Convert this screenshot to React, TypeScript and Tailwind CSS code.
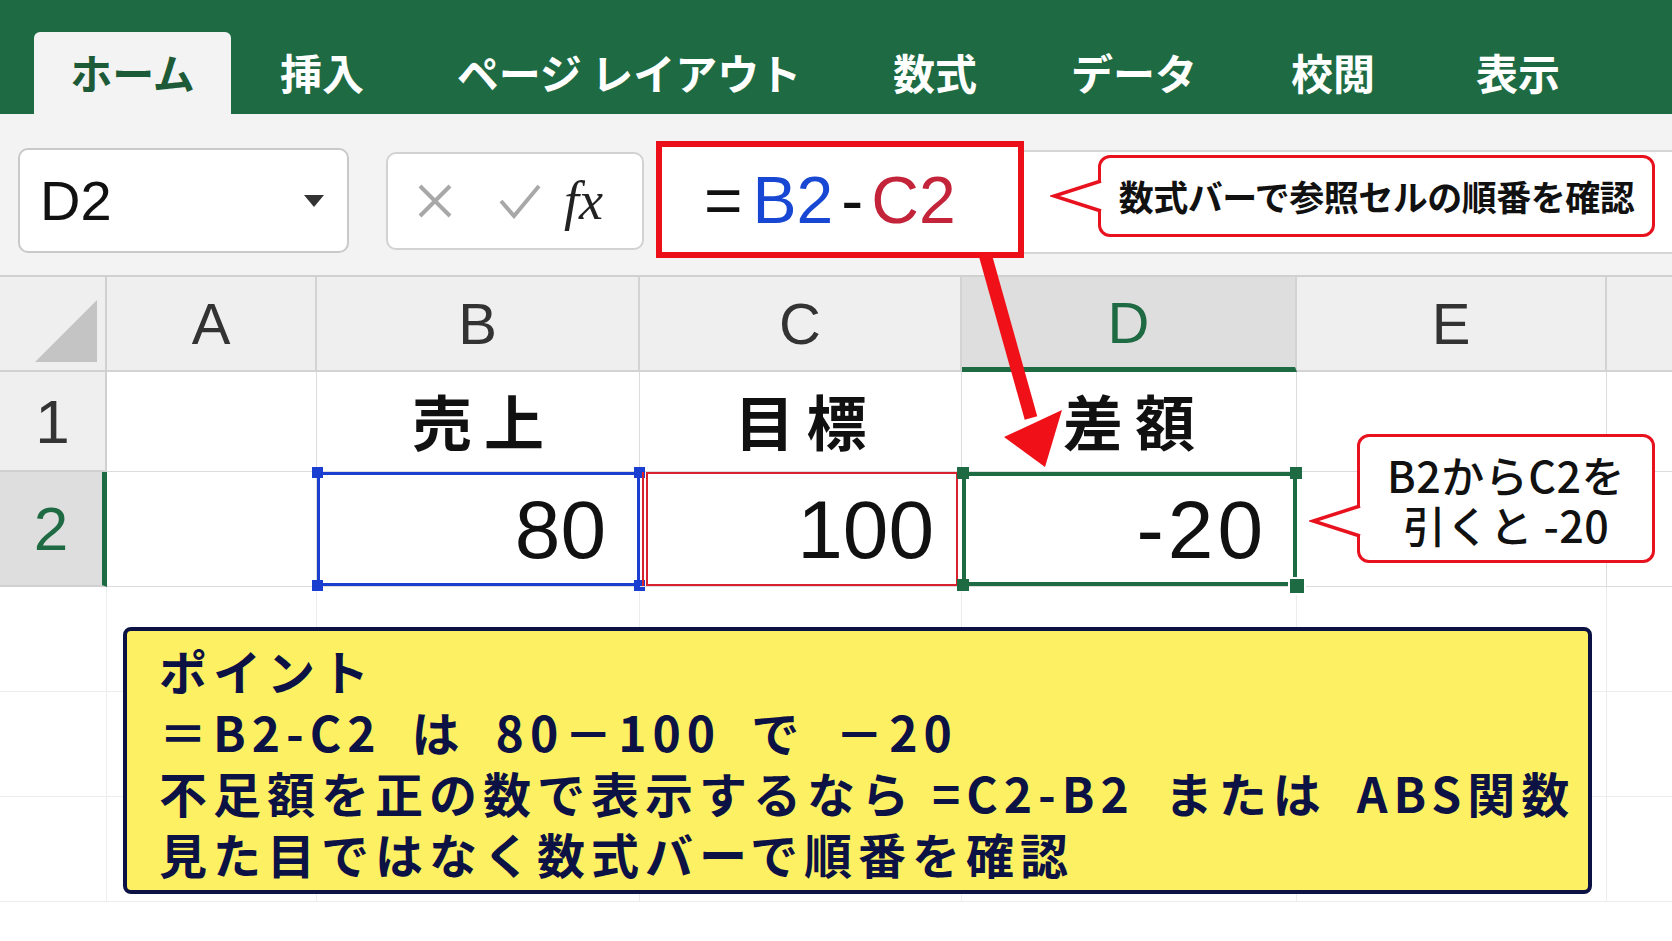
import React from "react";

const jp = "font-['Noto_Sans_CJK_JP',sans-serif]";
const latin = "font-['Liberation_Sans','Noto_Sans_CJK_JP',sans-serif]";

const tabs = [
  { label: "挿入", w: "w-[182px]" },
  { label: "ページ レイアウト", w: "w-[432px]" },
  { label: "数式", w: "w-[180px]" },
  { label: "データ", w: "w-[218px]" },
  { label: "校閲", w: "w-[180px]" },
  { label: "表示", w: "w-[190px]" },
];

const Tail: React.FC<{ className: string }> = ({ className }) => (
  <svg className={className} width="54" height="40" viewBox="0 0 54 40">
    <polygon points="54,5 3,20 54,35" fill="white" />
    <polyline points="51,5 4,20 51,35" fill="none" stroke="#e8121e" strokeWidth="3.5" />
  </svg>
);

const Handle: React.FC<{ className: string }> = ({ className }) => (
  <div className={"absolute " + className} />
);

export default function App() {
  return (
    <div className="relative w-[1672px] h-[941px] overflow-hidden bg-white">
      {/* ribbon */}
      <div className={"h-[114px] bg-[#1e6b43] flex items-end pl-[34px] " + jp}>
        <div className="w-[197px] h-[82px] bg-[#f3f3f3] rounded-t-[6px] flex items-center justify-center text-[42px] font-bold text-[#1d5a37] pb-[4px]">
          ホーム
        </div>
        {tabs.map((t) => (
          <div
            key={t.label}
            className={t.w + " h-[82px] flex items-center justify-center text-[42px] font-bold text-white whitespace-pre pb-[4px]"}
          >
            {t.label}
          </div>
        ))}
      </div>

      {/* formula bar */}
      <div className="h-[161px] bg-[#f3f3f3] flex items-start">
        <div className={"ml-[18px] mt-[34px] w-[331px] h-[105px] bg-white border-2 border-[#c9c9c9] rounded-[10px] flex items-center pl-[20px] pr-[22px] text-[56px] text-[#111] " + latin}>
          <span className="flex-1">D2</span>
          <svg width="22" height="14" viewBox="0 0 22 14">
            <polygon points="1,1 21,1 11,13" fill="#333" />
          </svg>
        </div>
        <div className="ml-[37px] mt-[38px] w-[258px] h-[98px] bg-white border-2 border-[#d2d2d2] rounded-[10px] flex items-center pl-[28px]">
          <svg width="38" height="38" viewBox="0 0 38 38">
            <path d="M4 4 L34 34 M34 4 L4 34" stroke="#a8a8a8" strokeWidth="4" />
          </svg>
          <svg className="ml-[44px]" width="44" height="36" viewBox="0 0 44 36">
            <path d="M3 18 L16 33 L41 3" stroke="#a8a8a8" strokeWidth="4" fill="none" />
          </svg>
          <span className="ml-[22px] text-[54px] italic text-[#222] font-['Liberation_Serif',serif] leading-none">fx</span>
        </div>
        <div className={"ml-[12px] mt-[27px] w-[368px] h-[117px] bg-white border-[6px] border-[#ec0f1a] flex items-center pl-[42px] text-[66px] leading-none " + latin}>
          <span className="text-[#111]">=</span>
          <span className="ml-[10px] text-[#1747d3]">B2</span>
          <span className="ml-[8px] text-[#111]">-</span>
          <span className="ml-[8px] text-[#c4243a]">C2</span>
        </div>
        <div className="flex-1 mt-[36px] h-[104px] bg-white border-y-2 border-[#d6d6d6] flex items-start">
          <div className={"relative ml-[74px] mt-[3px] w-[557px] h-[82px] bg-white border-[3.5px] border-[#e8121e] rounded-[12px] flex items-center justify-center text-[35px] font-bold text-[#111] tracking-[-0.5px] " + jp}>
            <Tail className="absolute left-[-51px] top-[18px]" />
            数式バーで参照セルの順番を確認
          </div>
        </div>
      </div>

      {/* sheet grid */}
      <div className="grid grid-cols-[107px_210px_323px_322px_335px_310px_1fr] grid-rows-[95px_100px_115px_105px_105px_105px] border-t-2 border-[#d0d0d0]">
        {/* header row */}
        <div className="relative bg-[#efefef] border-r-2 border-b-2 border-[#d0d0d0]">
          <svg className="absolute right-[8px] bottom-[8px]" width="62" height="62" viewBox="0 0 62 62">
            <polygon points="62,0 62,62 0,62" fill="#c4c4c4" />
          </svg>
        </div>
        {["A", "B", "C"].map((c) => (
          <div key={c} className={"bg-[#efefef] border-r-2 border-b-2 border-[#d3d3d3] flex items-center justify-center text-[58px] text-[#333] " + latin}>
            {c}
          </div>
        ))}
        <div className={"bg-[#dedede] border-r-2 border-[#d3d3d3] border-b-[5px] border-b-[#1e6b43] flex items-center justify-center text-[58px] text-[#1e6b43] " + latin}>
          D
        </div>
        <div className={"bg-[#efefef] border-r-2 border-b-2 border-[#d3d3d3] flex items-center justify-center text-[58px] text-[#333] " + latin}>
          E
        </div>
        <div className="bg-[#efefef] border-b-2 border-[#d3d3d3]" />

        {/* row 1 */}
        <div className={"bg-[#efefef] border-r-2 border-b-2 border-[#d0d0d0] flex items-center justify-center text-[62px] text-[#333] " + latin}>
          1
        </div>
        <div className="border-r border-b border-[#dcdcdc]" />
        <div className={"border-r border-b border-[#dcdcdc] flex items-center justify-center pl-[12px] pb-[4px] text-[60px] font-bold text-[#111] tracking-[12px] " + jp}>
          売上
        </div>
        <div className={"border-r border-b border-[#dcdcdc] flex items-center justify-center pl-[12px] pb-[4px] text-[60px] font-bold text-[#111] tracking-[12px] " + jp}>
          目標
        </div>
        <div className={"border-r border-b border-[#dcdcdc] flex items-center justify-center pl-[12px] pb-[4px] text-[60px] font-bold text-[#111] tracking-[12px] " + jp}>
          差額
        </div>
        <div className="border-r border-b border-[#dcdcdc]" />
        <div className="border-b border-[#dcdcdc]" />

        {/* row 2 */}
        <div className={"bg-[#dedede] border-r-[5px] border-[#1e6b43] border-b-2 border-b-[#d0d0d0] flex items-center justify-center text-[62px] text-[#1e6b43] " + latin}>
          2
        </div>
        <div className="border-r border-b border-[#dcdcdc]" />
        <div className={"relative border-b border-[#dcdcdc] flex items-center justify-end pr-[34px] text-[82px] text-[#111] " + latin}>
          <div className="absolute inset-0 border-[3px] border-[#1a3fd0]" />
          <Handle className="left-[-5px] top-[-5px] w-[11px] h-[11px] bg-[#1a3fd0]" />
          <Handle className="right-[-5px] top-[-5px] w-[11px] h-[11px] bg-[#1a3fd0]" />
          <Handle className="left-[-5px] bottom-[-5px] w-[11px] h-[11px] bg-[#1a3fd0]" />
          <Handle className="right-[-5px] bottom-[-5px] w-[11px] h-[11px] bg-[#1a3fd0]" />
          80
        </div>
        <div className={"relative border-b border-[#dcdcdc] flex items-center justify-end pr-[28px] text-[82px] text-[#111] " + latin}>
          <div className="absolute left-[6px] right-[4px] top-0 bottom-0 border-2 border-[#d9202e]" />
          <div className="absolute left-[2px] top-0 bottom-0 w-[2px] bg-[#d9202e]" />
          100
        </div>
        <div className={"relative border-b border-[#dcdcdc] flex items-center justify-end pr-[30px] text-[82px] text-[#111] " + latin}>
          <div className="absolute inset-0 border-[4px] border-[#1e6b43]" />
          <Handle className="left-[-5px] top-[-5px] w-[12px] h-[12px] bg-[#1e6b43]" />
          <Handle className="right-[-5px] top-[-5px] w-[12px] h-[12px] bg-[#1e6b43]" />
          <Handle className="left-[-5px] bottom-[-5px] w-[12px] h-[12px] bg-[#1e6b43]" />
          <Handle className="right-[-9px] bottom-[-9px] w-[18px] h-[18px] bg-[#1e6b43] border-2 border-white" />
          <span className="tracking-[4px]">-20</span>
        </div>
        <div className="border-r border-b border-[#dcdcdc]" />
        <div className="border-b border-[#dcdcdc]" />

        {/* empty rows */}
        {Array.from({ length: 21 }).map((_, i) => (
          <div
            key={i}
            className={
              (i % 7 === 6 ? "" : "border-r ") +
              (i % 7 === 0 ? "border-r-[#eeeeee] " : "border-[#ececec] ") +
              "border-b border-b-[#ececec]"
            }
          />
        ))}
      </div>

      {/* arrow */}
      <svg className="absolute left-0 top-0 pointer-events-none" width="1672" height="941" viewBox="0 0 1672 941">
        <line x1="985" y1="254" x2="1031" y2="418" stroke="#f01018" strokeWidth="13" />
        <polygon points="1045,467 1004,437 1062,410" fill="#f01018" />
      </svg>

      {/* callout 2 */}
      <div className={"absolute left-[1357px] top-[434px] w-[298px] h-[129px] bg-white border-[3.5px] border-[#e8121e] rounded-[12px] flex flex-col items-center justify-center text-[43px] font-medium leading-[50px] tracking-[0.5px] text-[#111] " + jp}>
        <Tail className="absolute left-[-51px] top-[64px]" />
        <span className="block h-[50px]">B2からC2を</span>
        <span className="block h-[50px]">引くと -20</span>
      </div>

      {/* point box */}
      <div className={"absolute left-[123px] top-[627px] w-[1469px] h-[267px] bg-[#fdf163] border-[4px] border-[#0d1245] rounded-[8px] pl-[32px] pt-[9px] text-[48px] font-bold leading-[61px] text-[#0d1245] tracking-[6px] " + jp}>
        <div>ポイント</div>
        <div className="whitespace-pre">{"＝B2-C2\u2002は\u200280－100\u2002で\u2002－20"}</div>
        <div className="whitespace-pre">{"不足額を正の数で表示するなら =C2-B2\u2002または\u2002ABS関数"}</div>
        <div>見た目ではなく数式バーで順番を確認</div>
      </div>
    </div>
  );
}
